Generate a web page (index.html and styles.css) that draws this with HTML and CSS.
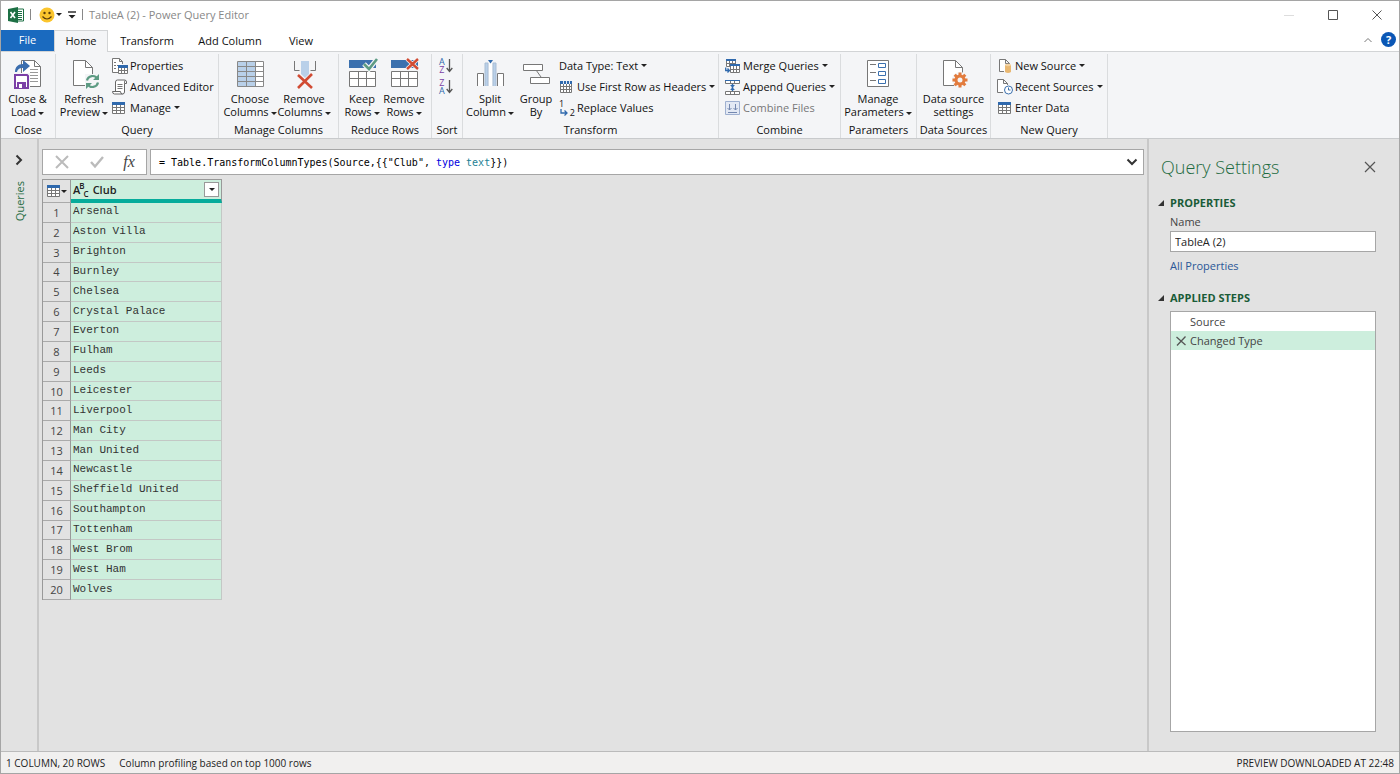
FILE: index.html
```
<!DOCTYPE html>
<html lang="en">
<head>
    <meta charset="UTF-8">
    <meta name="viewport" content="width=device-width, initial-scale=1.0">
    <title>TableA (2) - Power Query Editor</title>
    <link rel="stylesheet" href="styles.css">
</head>
<body>
    <header class="titlebar">
        <svg class="app-icon" width="16" height="16" viewBox="0 0 16 16">
            <path d="M8 2h7.5v12H8z" fill="#fff" stroke="#1d7044"/>
            <path d="M9 4.5h5M9 6.5h5M9 8.5h5M9 10.5h5M9 12.5h5" stroke="#1d7044"/>
            <path d="M0 2l10-2v16L0 14z" fill="#1d7044"/>
            <path d="M2.5 5l4.5 6M7 5l-4.5 6" stroke="#fff" stroke-width="1.6"/>
        </svg>
        <span class="divider"></span>
        <button class="quick smile" aria-label="Send feedback">
            <svg width="16" height="16" viewBox="0 0 16 16">
                <circle cx="8" cy="8" r="7.5" fill="#fbc52d"/>
                <circle cx="5.5" cy="6" r="1.2" fill="#5a3c0a"/>
                <circle cx="10.5" cy="6" r="1.2" fill="#5a3c0a"/>
                <path d="M3.5 9.5q4.5 5 9 0" fill="none" stroke="#5a3c0a" stroke-width="1.2"/>
            </svg>
            <i class="caret"></i>
        </button>
        <button class="quick" aria-label="Customize toolbar">
            <svg width="8" height="8" viewBox="0 0 8 8"><path d="M0 1h8" stroke="#222" stroke-width="1.4"/><path d="M.5 4h7L4 7.5z" fill="#222"/></svg>
        </button>
        <span class="divider"></span>
        <span class="title">TableA (2) - Power Query Editor</span>
        <div class="window-buttons">
            <button class="minimize" aria-label="Minimize"><svg width="10" height="10" viewBox="0 0 10 10"><path d="M0 5.5h10" stroke="#ddd"/></svg></button>
            <button aria-label="Maximize"><svg width="10" height="10" viewBox="0 0 10 10"><path d="M.5.5h9v9h-9z" fill="none" stroke="#555"/></svg></button>
            <button aria-label="Close"><svg width="10" height="10" viewBox="0 0 10 10"><path d="M.5.5l9 9M9.5.5l-9 9" stroke="#555"/></svg></button>
        </div>
    </header>

    <nav class="tabs">
        <button class="tab file">File</button>
        <button class="tab active">Home</button>
        <button class="tab wide">Transform</button>
        <button class="tab wider">Add Column</button>
        <button class="tab">View</button>
        <div class="tab-tools">
            <button aria-label="Collapse ribbon"><svg width="8" height="6" viewBox="0 0 8 6"><path d="M.5 5L4 1.5 7.5 5" fill="none" stroke="#777"/></svg></button>
            <button class="help" aria-label="Help">?</button>
        </div>
    </nav>

    <section class="ribbon">
        <div class="group g-close">
            <div class="tools">
                <button class="large">
                    <svg width="32" height="32" viewBox="0 0 32 32">
                        <path d="M9.5 2.5h13l6 6v20h-19z" fill="#fff" stroke="#777"/>
                        <path d="M22.5 2.5v6h6" fill="none" stroke="#777"/>
                        <path d="M18 11.5h8M18 14.5h8M18 17.5h8M18 20.5h8M18 23.5h8" stroke="#999"/>
                        <path d="M3 14c0-5 3-8 8-8V2l7 6-7 6v-4c-4 0-5 1-6 4z" fill="#3b6eae"/>
                        <path d="M1 15h17v17H1z" fill="#f4f5f7"/>
                        <path d="M3 17h12l1 1v12H3z" fill="#fff" stroke="#7b3fa6" stroke-width="2"/>
                        <path d="M5 24h9v6H5z" fill="#7b3fa6"/><path d="M7 26h3v4H7z" fill="#fff"/>
                    </svg>
                    <span>Close &amp;<br>Load<i class="caret"></i></span>
                </button>
            </div>
            <h2>Close</h2>
        </div>

        <div class="group g-query">
            <div class="tools">
                <button class="large">
                    <svg width="32" height="32" viewBox="0 0 32 32">
                        <path d="M5.5 2.5h12l7 7v18h-19z" fill="#fff" stroke="#777"/>
                        <path d="M17.5 2.5v7h7" fill="none" stroke="#777"/>
                        <path d="M17 16h14v15H17z" fill="#f4f5f7"/>
                        <path d="M19 22.5c1-5 8-6 10-2M30 24.5c-1 5-8 6-10 2" fill="none" stroke="#5d9b83" stroke-width="2.2"/>
                        <path d="M31 16v6h-6zM18 31v-6h6z" fill="#5d9b83"/>
                    </svg>
                    <span>Refresh<br>Preview<i class="caret"></i></span>
                </button>
                <div class="stack">
                    <button class="small">
                        <svg width="16" height="16" viewBox="0 0 16 16">
                            <path d="M6 14.5H.5V.5h7l3 3V6M7.5.5v3h3" fill="#fff" stroke="#777"/>
                            <path d="M2 4.5h2M2 7.5h2M2 10.5h2M5 7.5h2" stroke="#777"/>
                            <path d="M6.5 7.5h9v8h-9zM6.5 12.5h9M9.5 8v7M12.5 8v7" fill="#fff" stroke="#777"/>
                            <path d="M6 7h10v3H6z" fill="#2f69ad"/>
                        </svg>
                        Properties
                    </button>
                    <button class="small">
                        <svg width="16" height="16" viewBox="0 0 16 16">
                            <path d="M3.5 12V3q0-2 2-2h7q2 0 2 2v1.500h-2V13q0 2-2 2h-8q-2 0-2-2.500h8q0 2.500 2 2.500" fill="#fff" stroke="#666"/>
                            <path d="M12.5 4.500V3q0-1.500 1-2M5.500 5.500h5M5.500 7.500h5M5.500 9.500h5" fill="none" stroke="#777"/>
                        </svg>
                        Advanced Editor
                    </button>
                    <button class="small">
                        <svg width="16" height="16" viewBox="0 0 16 16">
                            <path d="M.5 3.5h12v10H.5zM.5 7.5h12M.5 10.5h12M4.5 5v9M8.5 5v9" fill="#fff" stroke="#777"/>
                            <path d="M0 2h13v3H0z" fill="#2f69ad"/>
                        </svg>
                        Manage<i class="caret"></i>
                    </button>
                </div>
            </div>
            <h2>Query</h2>
        </div>

        <div class="group g-columns">
            <div class="tools">
                <button class="large">
                    <svg width="32" height="32" viewBox="0 0 32 32">
                        <path d="M3.5 3.5h26v25h-26z" fill="#fff"/>
                        <path d="M4 4h17v24H4z" fill="#b9d0e9"/>
                        <path d="M3.5 3.5h26v25h-26zM12.5 3v25M21.5 3v25M3 8.5h26M3 13.5h26M3 18.5h26M3 23.5h26" fill="none" stroke="#888"/>
                    </svg>
                    <span>Choose<br>Columns<i class="caret"></i></span>
                </button>
                <button class="large">
                    <svg width="32" height="32" viewBox="0 0 32 32">
                        <path d="M6.5 3v9.5h5M27.5 3v9.5h-5" fill="none" stroke="#777"/>
                        <path d="M13 3h8v13l-4 4-4-4z" fill="#b9d0e9"/>
                        <path d="M10 17l14 13M24 16L10 30" stroke="#d14b33" stroke-width="2.6"/>
                    </svg>
                    <span>Remove<br>Columns<i class="caret"></i></span>
                </button>
            </div>
            <h2>Manage Columns</h2>
        </div>

        <div class="group g-rows">
            <div class="tools">
                <button class="large">
                    <svg width="32" height="32" viewBox="0 0 32 32">
                        <path d="M3 2h27v8H3z" fill="#3b70ae"/>
                        <path d="M3.5 13.5h26v15h-26zM3 20.5h26M12.5 13v15M20.5 13v15" fill="#fff" stroke="#777"/>
                        <path d="M18 6l5 5 8-10" fill="none" stroke="#f4f5f7" stroke-width="5"/>
                        <path d="M18 6l5 5 8-10" fill="none" stroke="#5d9b83" stroke-width="2.6"/>
                    </svg>
                    <span>Keep<br>Rows<i class="caret"></i></span>
                </button>
                <button class="large">
                    <svg width="32" height="32" viewBox="0 0 32 32">
                        <path d="M3 2h27v8H3z" fill="#3b70ae"/>
                        <path d="M3.5 13.5h26v15h-26zM3 20.5h26M12.5 13v15M20.5 13v15" fill="#fff" stroke="#777"/>
                        <path d="M19 1l11 10M30 1L19 11" stroke="#f4f5f7" stroke-width="4"/>
                        <path d="M19 1l11 10M30 1L19 11" stroke="#d14b33" stroke-width="2.4"/>
                    </svg>
                    <span>Remove<br>Rows<i class="caret"></i></span>
                </button>
            </div>
            <h2>Reduce Rows</h2>
        </div>

        <div class="group g-sort">
            <div class="tools">
                <div class="stack">
                    <button class="sort" aria-label="Sort ascending">
                        <span class="letters"><b class="a">A</b><b class="z">Z</b></span>
                        <svg width="7" height="16" viewBox="0 0 7 16"><path d="M3.5 1v12M.7 10l2.8 3.5L6.3 10" fill="none" stroke="#555" stroke-width="1.3"/></svg>
                    </button>
                    <button class="sort" aria-label="Sort descending">
                        <span class="letters"><b class="z">Z</b><b class="a">A</b></span>
                        <svg width="7" height="16" viewBox="0 0 7 16"><path d="M3.5 1v12M.7 10l2.8 3.5L6.3 10" fill="none" stroke="#555" stroke-width="1.3"/></svg>
                    </button>
                </div>
            </div>
            <h2>Sort</h2>
        </div>

        <div class="group g-transform">
            <div class="tools">
                <button class="large">
                    <svg width="32" height="32" viewBox="0 0 32 32">
                        <path d="M3.5 28V15.5h6V28M23.500 28V15.500h6V28" fill="#fff" stroke="#777"/>
                        <path d="M11 28V5h3v23M19 28V5h3v23" fill="#b9d0e9" stroke="#a9bdd4"/>
                        <path d="M16.500 5v23" stroke="#fff" stroke-width="3"/>
                        <path d="M14 2h5l-2.500 3.500z" fill="#2f69ad"/>
                    </svg>
                    <span>Split<br>Column<i class="caret"></i></span>
                </button>
                <button class="large">
                    <svg width="32" height="32" viewBox="0 0 32 32">
                        <path d="M16 12l5 7" stroke="#777"/>
                        <path d="M3.5 6.5h19v6h-19zM10.5 19.5h19v6h-19z" fill="#fff" stroke="#777"/>
                    </svg>
                    <span>Group<br>By</span>
                </button>
                <div class="stack">
                    <button class="small">Data Type: Text<i class="caret"></i></button>
                    <button class="small">
                        <svg width="16" height="16" viewBox="0 0 16 16">
                            <path d="M1.5 2.5h11v11h-11zM1.500 7.500h11M1.500 10.500h11M4.500 5v9M7.500 5v9M10.500 5v9" fill="#fff" stroke="#777"/>
                            <path d="M1 2h12v3H1z" fill="#2f69ad"/>
                            <path d="M4.500 2v3M7.500 2v3M10.500 2v3" stroke="#dfe8f3"/>
                        </svg>
                        Use First Row as Headers<i class="caret"></i>
                    </button>
                    <button class="small">
                        <span class="replace"><span>1</span><span class="two">2</span>
                            <svg width="8" height="7" viewBox="0 0 8 7"><path d="M1 0v4h6M4.500 1.500L7 4 4.500 6.500" fill="none" stroke="#2f69ad" stroke-width="1.300"/></svg>
                        </span>
                        Replace Values
                    </button>
                </div>
            </div>
            <h2>Transform</h2>
        </div>

        <div class="group g-combine">
            <div class="tools">
                <div class="stack">
                    <button class="small">
                        <svg width="16" height="16" viewBox="0 0 16 16">
                            <path d="M1.5 1.5h9v7h-9zM1.5 5.5h9M4.5 2v6M7.5 2v6" fill="#fff" stroke="#777"/>
                            <path d="M1 1h10v2H1z" fill="#2f69ad"/>
                            <path d="M5.5 6.500h9v8h-9zM5.500 11.500h9M8.500 7v7M11.500 7v7" fill="#fff" stroke="#777"/>
                            <path d="M5 6h10v2H5z" fill="#2f69ad"/>
                            <path d="M.700 9.500v3H4M2.500 10.500l2 2-2 2" fill="none" stroke="#2f69ad" stroke-width="1.300"/>
                        </svg>
                        Merge Queries<i class="caret"></i>
                    </button>
                    <button class="small">
                        <svg width="16" height="16" viewBox="0 0 16 16">
                            <path d="M.5 1.5h14v3H.5zM5.500 1v4M9.500 1v4M.5 12.500h14v3H.5zM5.500 12v4M9.500 12v4" fill="#fff" stroke="#777"/>
                            <path d="M0 1h15v1H0z" fill="#2f69ad"/>
                            <path d="M7.500 5v7" stroke="#2f69ad" stroke-width="1.500"/>
                            <path d="M5 6h5L7.500 8.500zM5 11h5L7.500 8.500z" fill="#2f69ad"/>
                        </svg>
                        Append Queries<i class="caret"></i>
                    </button>
                    <button class="small" disabled>
                        <svg width="16" height="16" viewBox="0 0 16 16">
                            <path d="M.5 1.5h14v13H.5z" fill="#e3e9f4" stroke="#9fb0d0"/>
                            <path d="M4.500 4v6M2.500 8l2 2 2-2M10.500 4v6M8.500 8l2 2 2-2M3 12.500h9" fill="none" stroke="#7488b0"/>
                        </svg>
                        Combine Files
                    </button>
                </div>
            </div>
            <h2>Combine</h2>
        </div>

        <div class="group g-params">
            <div class="tools">
                <button class="large">
                    <svg width="32" height="32" viewBox="0 0 32 32">
                        <path d="M5.5 2.5h21v26h-21z" fill="#fff" stroke="#777"/>
                        <path d="M8 6.5h6M8 14.5h6M8 22.5h6" stroke="#777"/>
                        <path d="M16.5 5.5h7v4h-7zM16.5 13.5h7v4h-7zM16.5 21.5h7v4h-7z" fill="#fff" stroke="#3b70ae"/>
                    </svg>
                    <span>Manage<br>Parameters<i class="caret"></i></span>
                </button>
            </div>
            <h2>Parameters</h2>
        </div>

        <div class="group g-sources">
            <div class="tools">
                <button class="large">
                    <svg width="32" height="32" viewBox="0 0 32 32">
                        <path d="M5.5 2.5h12l7 7v18h-19z" fill="#fff" stroke="#777"/>
                        <path d="M17.5 2.5v7h7" fill="none" stroke="#777"/>
                        <circle cx="22" cy="22" r="8" fill="#f4f5f7"/>
                        <path d="M22 14.500v15M14.500 22h15M16.700 16.700l10.600 10.600M27.300 16.700L16.700 27.300" stroke="#e27b3d" stroke-width="3"/>
                        <circle cx="22" cy="22" r="4" fill="#f4f5f7" stroke="#e27b3d" stroke-width="3"/>
                    </svg>
                    <span>Data source<br>settings</span>
                </button>
            </div>
            <h2>Data Sources</h2>
        </div>

        <div class="group g-new">
            <div class="tools">
                <div class="stack">
                    <button class="small">
                        <svg width="16" height="16" viewBox="0 0 16 16">
                            <path d="M7 13.5H2.5V1.500h6l4 4V7M8.500 1.500v4h4" fill="#fff" stroke="#777"/>
                            <path d="M8 7v7q3 2 6 0V7z" fill="#e9b872"/><ellipse cx="11" cy="7" rx="3" ry="1.200" fill="#f3d3a3"/>
                        </svg>
                        New Source<i class="caret"></i>
                    </button>
                    <button class="small">
                        <svg width="16" height="16" viewBox="0 0 16 16">
                            <path d="M6 13.5H.5V.5h6l4 4V6M6.500.500v4h4" fill="#fff" stroke="#777"/>
                            <circle cx="11.500" cy="11" r="4" fill="#fff" stroke="#3b70ae"/><path d="M11.500 8.500V11h2" fill="none" stroke="#3b70ae"/>
                        </svg>
                        Recent Sources<i class="caret"></i>
                    </button>
                    <button class="small">
                        <svg width="16" height="16" viewBox="0 0 16 16">
                            <path d="M1.5 3.5h12v10h-12zM1.500 7.500h12M1.500 10.500h12M5.500 5v9M9.500 5v9" fill="#fff" stroke="#777"/>
                            <path d="M1 2h13v3H1z" fill="#2f69ad"/>
                        </svg>
                        Enter Data
                    </button>
                </div>
            </div>
            <h2>New Query</h2>
        </div>
    </section>

    <div class="workspace">
        <aside class="queries">
            <button aria-label="Expand queries"><svg width="8" height="12" viewBox="0 0 8 12"><path d="M1.500 1.500L6 6l-4.500 4.500" fill="none" stroke="#333" stroke-width="2"/></svg></button>
            <span>Queries</span>
        </aside>

        <main>
            <div class="formula-row">
                <div class="formula-tools">
                    <button aria-label="Cancel"><svg width="16" height="14" viewBox="0 0 16 14"><path d="M2 1l12 12M14 1L2 13" stroke="#bbb" stroke-width="2"/></svg></button>
                    <button aria-label="Accept"><svg width="16" height="14" viewBox="0 0 16 14"><path d="M2 7l4 4.500L14 2" fill="none" stroke="#bbb" stroke-width="2.400"/></svg></button>
                    <button class="fx" aria-label="Insert step">fx</button>
                </div>
                <div class="formula">
                    <code>= Table.TransformColumnTypes(Source,{{"Club", <span class="kw">type</span> <span class="type">text</span>}})</code>
                    <button aria-label="Expand formula bar"><svg width="12" height="8" viewBox="0 0 12 8"><path d="M1.500 1.500L6 6l4.500-4.500" fill="none" stroke="#333" stroke-width="2"/></svg></button>
                </div>
            </div>

            <table class="preview">
                <thead>
                    <tr>
                        <th class="corner">
                            <button aria-label="Table options">
                                <svg width="13" height="12" viewBox="0 0 13 12"><path d="M.5 1.500h12v10H.5zM.5 5.500h12M.5 8.500h12M4.500 3v8M8.500 3v8" fill="#fff" stroke="#777"/><path d="M0 0h13v3H0z" fill="#2f69ad"/></svg><i class="caret"></i>
                            </button>
                        </th>
                        <th class="column">
                            <div class="column-head">
                                <span class="abc">A<sup>B</sup><sub>C</sub></span>
                                <span class="column-name">Club</span>
                                <button class="filter" aria-label="Filter Club"><i class="caret"></i></button>
                            </div>
                        </th>
                    </tr>
                </thead>
                <tbody>
                    <tr><th>1</th><td>Arsenal</td></tr>
                    <tr><th>2</th><td>Aston Villa</td></tr>
                    <tr><th>3</th><td>Brighton</td></tr>
                    <tr><th>4</th><td>Burnley</td></tr>
                    <tr><th>5</th><td>Chelsea</td></tr>
                    <tr><th>6</th><td>Crystal Palace</td></tr>
                    <tr><th>7</th><td>Everton</td></tr>
                    <tr><th>8</th><td>Fulham</td></tr>
                    <tr><th>9</th><td>Leeds</td></tr>
                    <tr><th>10</th><td>Leicester</td></tr>
                    <tr><th>11</th><td>Liverpool</td></tr>
                    <tr><th>12</th><td>Man City</td></tr>
                    <tr><th>13</th><td>Man United</td></tr>
                    <tr><th>14</th><td>Newcastle</td></tr>
                    <tr><th>15</th><td>Sheffield United</td></tr>
                    <tr><th>16</th><td>Southampton</td></tr>
                    <tr><th>17</th><td>Tottenham</td></tr>
                    <tr><th>18</th><td>West Brom</td></tr>
                    <tr><th>19</th><td>West Ham</td></tr>
                    <tr><th>20</th><td>Wolves</td></tr>
                </tbody>
            </table>
        </main>

        <aside class="settings">
            <div class="settings-head">
                <h1>Query Settings</h1>
                <button aria-label="Close pane"><svg width="12" height="12" viewBox="0 0 12 12"><path d="M1 1l10 10M11 1L1 11" stroke="#555" stroke-width="1.200"/></svg></button>
            </div>
            <h3>PROPERTIES</h3>
            <div class="properties">
                <label for="queryName">Name</label>
                <input type="text" id="queryName" value="TableA (2)">
                <a href="#">All Properties</a>
            </div>
            <h3>APPLIED STEPS</h3>
            <ul class="steps">
                <li>Source</li>
                <li class="selected">
                    <button aria-label="Delete step"><svg width="10" height="10" viewBox="0 0 10 10"><path d="M.5 1l9 8M9.500.500L1 9.500" stroke="#555" stroke-width="1.300"/></svg></button>
                    Changed Type
                </li>
            </ul>
        </aside>
    </div>

    <footer class="statusbar">
        <span>1 COLUMN, 20 ROWS</span>
        <span>Column profiling based on top 1000 rows</span>
        <span class="right">PREVIEW DOWNLOADED AT 22:48</span>
    </footer>
</body>
</html>
```
FILE: styles.css
```
* {
    margin: 0;
    padding: 0;
    box-sizing: border-box;
}

body {
    font-family: 'Open Sans', 'Noto Sans', sans-serif;
    font-size: 11px;
    color: #111;
    background: #fff;
    min-height: 100vh;
    display: flex;
    flex-direction: column;
    border: 1px solid #a5a5a5;
}

button {
    background: none;
    border: none;
    font: inherit;
    color: inherit;
    display: flex;
    align-items: center;
    justify-content: center;
    white-space: nowrap;
}

svg {
    display: block;
    flex: none;
}

.caret {
    display: inline-block;
    border: 3px solid transparent;
    border-top-color: #222;
    border-bottom: none;
    vertical-align: middle;
}

/* title bar */
.titlebar {
    display: flex;
    align-items: center;
    height: 29px;
    padding: 0 0 2px 7px;
}

.divider {
    width: 1px;
    height: 11px;
    background: #888;
    margin: 0 6px;
}

.quick {
    gap: 1px;
    margin-right: 6px;
}

.quick + .divider {
    margin-left: 0;
}

.smile {
    margin-left: 2px;
}

.title {
    color: #888;
}

.window-buttons {
    display: flex;
    margin-left: auto;
}

.window-buttons button {
    width: 44px;
    height: 27px;
}

/* tabs */
.tabs {
    display: flex;
    height: 22px;
    border-bottom: 1px solid #d2d4d6;
}

.tab {
    width: 54px;
    height: 22px;
    padding-bottom: 2px;
}

.tab.file {
    width: 53px;
    height: 21px;
    background: #1a6abf;
    color: #fff;
}

.tab.active {
    background: #f4f5f7;
    border: 1px solid #d2d4d6;
    border-bottom: none;
}

.tab.wide {
    width: 78px;
}

.tab.wider {
    width: 88px;
}

.tab-tools {
    display: flex;
    align-items: center;
    gap: 9px;
    margin-left: auto;
    padding: 0 3px 2px 0;
}

.help {
    width: 15px;
    height: 15px;
    border-radius: 50%;
    background: #0b57b5;
    color: #fff;
    font-weight: bold;
}

/* ribbon */
.ribbon {
    display: flex;
    height: 87px;
    padding-top: 2px;
    background: #f4f5f7;
    border-bottom: 1px solid #c8cacc;
}

.group {
    display: flex;
    flex-direction: column;
    flex: none;
    border-right: 1px solid #dadcde;
}

.group h2 {
    font-size: 11px;
    font-weight: normal;
    line-height: 16px;
    text-align: center;
    white-space: nowrap;
}

.tools {
    display: flex;
    flex: 1;
    padding: 0 2px;
}

.large {
    flex-direction: column;
    justify-content: flex-start;
    padding-top: 4px;
    gap: 2px;
}

.large span {
    line-height: 13px;
    text-align: center;
}

.large .caret {
    margin-left: 2px;
}

.stack {
    display: flex;
    flex-direction: column;
    padding-top: 1px;
}

.small {
    height: 21px;
    gap: 2px;
    justify-content: flex-start;
}

.small .caret {
    margin-left: 1px;
}

.small:disabled {
    color: #777;
}

.g-close { width: 55px; }
.g-close .large { width: 49px; }
.g-query { width: 163px; }
.g-query .large { width: 52px; }
.g-columns { width: 120px; }
.g-columns .tools { padding: 0 4px; }
.g-columns .large { width: 54px; }
.g-rows { width: 93px; }
.g-rows .large { width: 42px; }
.g-sort { width: 31px; }
.g-transform { width: 256px; }
.g-transform .large { width: 50px; }
.g-transform .large + .large { width: 42px; }
.g-query .stack,
.g-transform .stack { padding-left: 2px; }
.g-combine { width: 122px; }
.g-combine .tools { padding-left: 6px; }
.g-params { width: 76px; }
.g-params .large { width: 70px; }
.g-sources { width: 74px; }
.g-sources .large { width: 70px; }
.g-new { width: 117px; }
.g-new .tools { padding-left: 6px; }

.sort {
    height: 21px;
    padding-left: 5px;
    gap: 1px;
}

.letters {
    display: flex;
    flex-direction: column;
    font-size: 9px;
    line-height: 8px;
}

.letters b {
    font-weight: normal;
}

.letters .a {
    color: #2f69ad;
}

.letters .z {
    color: #7b3fa6;
}

.replace {
    position: relative;
    width: 16px;
    height: 18px;
    font-size: 9px;
    line-height: 9px;
    text-align: left;
}

.replace .two {
    position: absolute;
    right: 0;
    bottom: 0;
}

.replace svg {
    position: absolute;
    left: 1px;
    bottom: 1px;
}

/* workspace */
.workspace {
    display: flex;
    flex: 1;
    background: #e2e2e2;
}

.queries {
    width: 38px;
    border-right: 2px solid #c8c8c8;
    display: flex;
    flex-direction: column;
    align-items: center;
    padding-top: 15px;
    gap: 15px;
}

.queries span {
    writing-mode: vertical-rl;
    transform: rotate(180deg);
    color: #1e6b41;
}

main {
    flex: 1;
    padding: 10px 3px;
    min-width: 0;
}

.formula-row {
    display: flex;
    gap: 3px;
    height: 26px;
    margin-bottom: 4px;
}

.formula-tools,
.formula {
    display: flex;
    align-items: center;
    background: #fff;
    border: 1px solid #a6a6a6;
}

.formula-tools {
    width: 105px;
    justify-content: space-around;
    padding: 0 2px;
}

.fx {
    font: italic 16px 'Liberation Serif', serif;
    color: #444;
}

.formula {
    flex: 1;
    justify-content: space-between;
    padding: 0 5px 0 8px;
}

.formula code {
    font: 10px 'DejaVu Sans Mono', monospace;
    color: #000;
}

.formula .kw {
    color: #0000e0;
}

.formula .type {
    color: #1c7f94;
}

/* preview grid */
.preview {
    width: 180px;
    height: 421px;
    border-collapse: separate;
    border-spacing: 0;
    table-layout: fixed;
    border-left: 1px solid #999;
    border-top: 1px solid #999;
}

.preview thead tr {
    height: 23px;
}

.preview th {
    width: 28px;
    border-right: 1px solid #999;
    border-bottom: 1px solid #aaa;
    font-weight: normal;
    line-height: 15px;
    color: #444;
}

.preview td {
    background: #cdeedd;
    border-right: 1px solid #c3c8c5;
    border-bottom: 1px solid #c3c8c5;
    padding: 0 0 1px 2px;
    font: 11px 'Liberation Mono', monospace;
    line-height: 15px;
    color: #333;
}

.preview .corner button {
    width: 100%;
    gap: 1px;
}

.preview .column {
    width: auto;
    background: #cdeedd;
    border-bottom: 4px solid #06ac9b;
}

.column-head {
    display: flex;
    align-items: center;
    padding: 0 2px;
    color: #222;
}

.column-name {
    font-weight: 600;
    margin-left: 4px;
}

.abc {
    line-height: 14px;
    font-weight: 600;
}

.abc sup,
.abc sub {
    font-size: 8px;
    line-height: 0;
    margin-left: -1px;
}

.filter {
    width: 15px;
    height: 15px;
    margin-left: auto;
    background: #fff;
    border: 1px solid #999;
}

/* settings pane */
.settings {
    width: 252px;
    border-left: 2px solid #c8c8c8;
    padding: 16px 23px 19px 12px;
    display: flex;
    flex-direction: column;
}

.settings-head {
    display: flex;
    align-items: center;
    justify-content: space-between;
    margin-bottom: 16px;
}

h1 {
    font-size: 18px;
    font-weight: 300;
    line-height: 24px;
    color: #1e6b41;
}

h3 {
    display: flex;
    align-items: center;
    gap: 6px;
    margin-left: -3px;
    font-size: 11px;
    line-height: 16px;
    color: #1a5c38;
}

h3::before {
    content: '';
    border-left: 6px solid transparent;
    border-bottom: 6px solid #333;
}

.properties {
    display: flex;
    flex-direction: column;
    align-items: flex-start;
    padding-left: 9px;
    margin-bottom: 16px;
    line-height: 16px;
    color: #444;
}

.properties label {
    padding: 3px 0 1px;
}

.properties input {
    width: 100%;
    height: 21px;
    margin-bottom: 6px;
    padding: 0 4px;
    border: 1px solid #a6a6a6;
    background: #fff;
    font: inherit;
    color: #222;
}

.properties a {
    color: #2b5797;
    text-decoration: none;
}

.steps {
    flex: 1;
    margin: 5px 0 0 9px;
    background: #fff;
    border: 1px solid #a6a6a6;
    list-style: none;
}

.steps li {
    display: flex;
    align-items: center;
    height: 19px;
    padding-left: 19px;
    color: #444;
}

.steps .selected {
    background: #cdeedd;
    padding-left: 5px;
    gap: 4px;
}

/* status bar */
.statusbar {
    display: flex;
    align-items: center;
    gap: 14px;
    height: 22px;
    padding: 0 5px;
    background: #f1f0ef;
    border-top: 1px solid #bbb;
    font-size: 10px;
    color: #222;
}

.statusbar .right {
    margin-left: auto;
}
```
